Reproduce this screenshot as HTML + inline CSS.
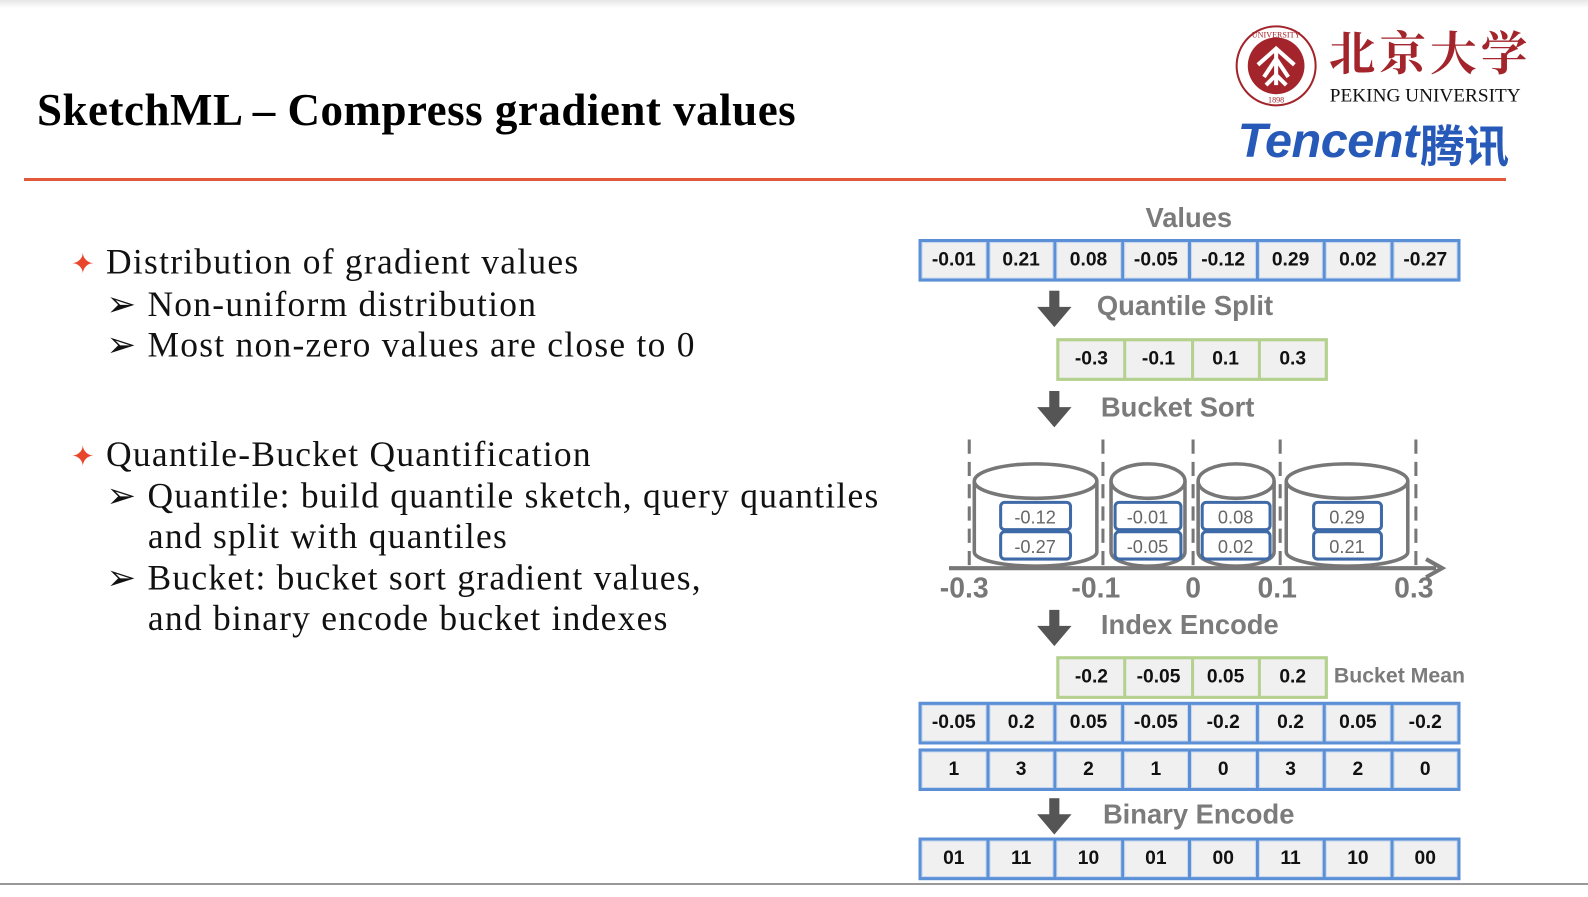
<!DOCTYPE html>
<html><head><meta charset="utf-8"><style>
*{margin:0;padding:0;box-sizing:border-box}
body{width:1588px;height:886px;background:#fff;position:relative;overflow:hidden;font-family:"Liberation Serif",serif}
.a{position:absolute}
#s{position:absolute;left:0;top:0;width:1588px;height:886px;transform:scale(1.0128);transform-origin:0 0}
.row{position:absolute;display:flex;border:3px solid #5b8fd6;background:#5b8fd6;gap:3px;height:42px}
.row.g{border-color:#b5d190;background:#b5d190}
.row div{flex:1;background:#f0f0f0;display:flex;align-items:center;justify-content:center;font:bold 19px "Liberation Sans",sans-serif;color:#111;box-shadow:inset 0 0 0 1px #c7d8ef}
.row.g div{box-shadow:none}
.lbl{position:absolute;font:bold 27px "Liberation Sans",sans-serif;color:#7b7b7b}
.txt{position:absolute;font-size:35px;line-height:40px;letter-spacing:1.25px;color:#111;white-space:nowrap}
.arr{position:absolute;width:34px;height:36px}
</style></head><body>
<div class="a" style="left:0;top:0;width:1588px;height:8px;background:linear-gradient(#e6e6e6,#fff)"></div>
<div class="a" style="left:37px;top:84px;font:bold 45px 'Liberation Serif',serif;color:#000;letter-spacing:0.5px">SketchML – Compress gradient values</div>
<div class="a" style="left:24px;top:178px;width:1482px;height:3px;background:#e2583a"></div>
<div id="s">
<!-- logos -->
<svg class="a" style="left:1218px;top:24px" width="88" height="82" viewBox="0 0 88 82">
<circle cx="42" cy="41" r="39" fill="none" stroke="#a3252b" stroke-width="2"/>
<circle cx="42" cy="41" r="28" fill="#a3252b"/>
<path d="M24 40 L42 24 L60 40 M30 52 L42 34 L54 52 M42 24 V60 M32 60 L42 50 L52 60" stroke="#fff" stroke-width="4" fill="none"/>
<text x="42" y="13" font-size="8" text-anchor="middle" fill="#a3252b" font-family="Liberation Serif">UNIVERSITY</text>
<text x="42" y="77" font-size="8" text-anchor="middle" fill="#a3252b" font-family="Liberation Serif">1898</text>
</svg>
<div class="a" style="left:1312px;top:22px;font:bold 46px 'Noto Serif CJK SC','WenQuanYi Zen Hei',serif;color:#a3252b;letter-spacing:4px;line-height:56px">北京大学</div>
<div class="a" style="left:1313px;top:84px;font:19px 'Liberation Serif',serif;color:#111">PEKING UNIVERSITY</div>
<div class="a" style="left:1222px;top:112px;font:italic bold 48px 'Liberation Sans',sans-serif;color:#2659b8;letter-spacing:-0.5px">Tencent</div>
<div class="a" style="left:1402px;top:114px;font:bold 44px 'Noto Sans CJK SC',sans-serif;color:#2659b8;line-height:54px">腾讯</div>

<!-- left text -->
<div class="txt" style="left:70px;top:239px"><span style="color:#e8452c;font-size:28px">✦</span>&nbsp;Distribution of gradient values</div>
<div class="txt" style="left:105px;top:281px">➢ Non-uniform distribution</div>
<div class="txt" style="left:105px;top:321px">➢ Most non-zero values are close to 0</div>
<div class="txt" style="left:70px;top:429px"><span style="color:#e8452c;font-size:28px">✦</span>&nbsp;Quantile-Bucket Quantification</div>
<div class="txt" style="left:105px;top:470px">➢ Quantile: build quantile sketch, query quantiles</div>
<div class="txt" style="left:146px;top:510px">and split with quantiles</div>
<div class="txt" style="left:105px;top:551px">➢ Bucket: bucket sort gradient values,</div>
<div class="txt" style="left:146px;top:591px">and binary encode bucket indexes</div>

<!-- diagram -->
<div class="lbl" style="left:1131px;top:200px">Values</div>
<div class="row" style="left:907px;top:236px;width:535px"><div>-0.01</div><div>0.21</div><div>0.08</div><div>-0.05</div><div>-0.12</div><div>0.29</div><div>0.02</div><div>-0.27</div></div>
<svg class="arr" style="left:1024px;top:287px" viewBox="0 0 34 36"><path d="M12 0h10v16h12L17 36 0 16h12z" fill="#555"/></svg>
<div class="lbl" style="left:1083px;top:287px">Quantile Split</div>
<div class="row g" style="left:1043px;top:334px;width:268px"><div>-0.3</div><div>-0.1</div><div>0.1</div><div>0.3</div></div>
<svg class="arr" style="left:1024px;top:386px" viewBox="0 0 34 36"><path d="M12 0h10v16h12L17 36 0 16h12z" fill="#555"/></svg>
<div class="lbl" style="left:1087px;top:387px">Bucket Sort</div>

<svg class="a" style="left:920px;top:430px" width="520" height="170" viewBox="920 430 520 170">
<g stroke="#777" stroke-width="3" stroke-dasharray="14 8" fill="none">
<path d="M957 434V558M1089 434V558M1178 434V558M1264 434V558M1398 434V558"/>
</g>
<g stroke="#777" stroke-width="3.5" fill="#fff">
<path d="M962 475V545A60.5 14 0 0 0 1083 545V475"/><ellipse cx="1022.5" cy="475" rx="60.5" ry="17"/>
<path d="M1097 475V545A36.5 14 0 0 0 1170 545V475"/><ellipse cx="1133.5" cy="475" rx="36.5" ry="17"/>
<path d="M1183 475V545A37.5 14 0 0 0 1258 545V475"/><ellipse cx="1220.5" cy="475" rx="37.5" ry="17"/>
<path d="M1270 475V545A60 14 0 0 0 1390 545V475"/><ellipse cx="1330" cy="475" rx="60" ry="17"/>
</g>
<g stroke="#3e6aa8" stroke-width="3" fill="#fff">
<rect x="988" y="496" width="69" height="27" rx="4"/><rect x="988" y="525" width="69" height="27" rx="4"/>
<rect x="1101" y="496" width="65" height="27" rx="4"/><rect x="1101" y="525" width="65" height="27" rx="4"/>
<rect x="1187" y="496" width="67" height="27" rx="4"/><rect x="1187" y="525" width="67" height="27" rx="4"/>
<rect x="1297" y="496" width="67" height="27" rx="4"/><rect x="1297" y="525" width="67" height="27" rx="4"/>
</g>
<g font-family="Liberation Sans" font-size="18" fill="#666" text-anchor="middle">
<text x="1022" y="517">-0.12</text><text x="1022" y="546">-0.27</text>
<text x="1133" y="517">-0.01</text><text x="1133" y="546">-0.05</text>
<text x="1220" y="517">0.08</text><text x="1220" y="546">0.02</text>
<text x="1330" y="517">0.29</text><text x="1330" y="546">0.21</text>
</g>
<path d="M937 561H1418" stroke="#777" stroke-width="4"/>
<path d="M1408 552L1424 561L1408 570" stroke="#777" stroke-width="4" fill="none"/>
<g font-family="Liberation Sans" font-weight="bold" font-size="28" fill="#777" text-anchor="middle">
<text x="952" y="590">-0.3</text><text x="1082" y="590">-0.1</text><text x="1178" y="590">0</text><text x="1261" y="590">0.1</text><text x="1396" y="590">0.3</text>
</g>
</svg>

<svg class="arr" style="left:1024px;top:602px" viewBox="0 0 34 36"><path d="M12 0h10v16h12L17 36 0 16h12z" fill="#555"/></svg>
<div class="lbl" style="left:1087px;top:602px">Index Encode</div>
<div class="row g" style="left:1043px;top:648px;width:268px"><div>-0.2</div><div>-0.05</div><div>0.05</div><div>0.2</div></div>
<div class="lbl" style="left:1317px;top:656px;font-size:21px">Bucket Mean</div>
<div class="row" style="left:907px;top:693px;width:535px"><div>-0.05</div><div>0.2</div><div>0.05</div><div>-0.05</div><div>-0.2</div><div>0.2</div><div>0.05</div><div>-0.2</div></div>
<div class="row" style="left:907px;top:739px;width:535px"><div>1</div><div>3</div><div>2</div><div>1</div><div>0</div><div>3</div><div>2</div><div>0</div></div>
<svg class="arr" style="left:1024px;top:788px" viewBox="0 0 34 36"><path d="M12 0h10v16h12L17 36 0 16h12z" fill="#555"/></svg>
<div class="lbl" style="left:1089px;top:789px">Binary Encode</div>
<div class="row" style="left:907px;top:827px;width:535px"><div>01</div><div>11</div><div>10</div><div>01</div><div>00</div><div>11</div><div>10</div><div>00</div></div>
</div>
<div class="a" style="left:0;top:883px;width:1588px;height:2px;background:#999"></div>
</body></html>
